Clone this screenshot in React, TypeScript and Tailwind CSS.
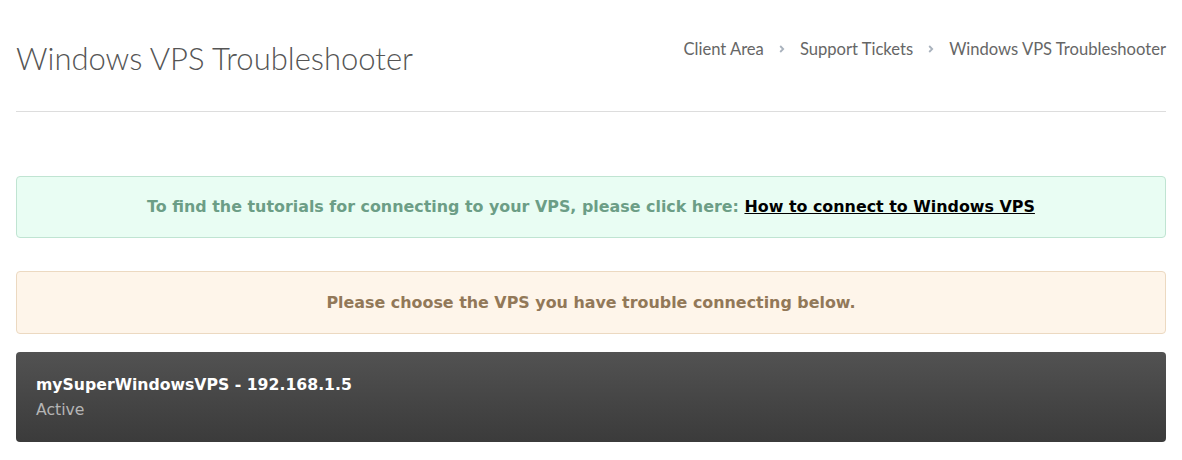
import React from "react";

export default function App() {
  const bold = { fontFamily: '"DejaVu Sans", Verdana, sans-serif' };
  const Chev = () => (
    <svg width="6" height="8" viewBox="0 0 6 8" className="mx-[15px]">
      <path d="M1.2 1 L4.2 4 L1.2 7" stroke="#a9b2bd" strokeWidth="1.8" fill="none" />
    </svg>
  );
  return (
    <div className="bg-white w-[1182px] h-[460px] overflow-hidden px-4">
      <div className="flex justify-between items-start pt-[38px] pb-[33px] border-b border-[#dddddd]">
        <h1 className="text-[31px] leading-[40px] text-[#555555] font-light" style={{ fontFamily: 'Lato, "Open Sans", sans-serif' }}>
          Windows VPS Troubleshooter
        </h1>
        <nav className="flex items-center text-[16.6px] leading-[22px] text-[#666666]" style={{ fontFamily: 'Lato, "Open Sans", sans-serif' }}>
          <span>Client Area</span>
          <Chev />
          <span>Support Tickets</span>
          <Chev />
          <span>Windows VPS Troubleshooter</span>
        </nav>
      </div>

      <div className="mt-[64px] h-[62px] rounded-[4px] border border-[#c0e4d2] bg-[#e9fdf3] flex items-center justify-center text-[15.9px] font-bold text-[#6c9e86]" style={bold}>
        <span>
          To find the tutorials for connecting to your VPS, please click here:{" "}
          <a className="text-black underline">How to connect to Windows VPS</a>
        </span>
      </div>

      <div className="mt-[33px] h-[63px] rounded-[4px] border border-[#ecd9c1] bg-[#fef5ea] flex items-center justify-center text-[15.9px] font-bold text-[#927858]" style={bold}>
        Please choose the VPS you have trouble connecting below.
      </div>

      <div className="mt-[18px] h-[90px] rounded-[4px] bg-gradient-to-b from-[#525252] to-[#3b3b3b] px-5 pt-[22px]" style={bold}>
        <div className="text-[15.7px] font-bold text-white leading-[22px]">mySuperWindowsVPS - 192.168.1.5</div>
        <div className="text-[15.7px] text-[#b5b5b5] leading-[22px] mt-[3px]">Active</div>
      </div>
    </div>
  );
}
